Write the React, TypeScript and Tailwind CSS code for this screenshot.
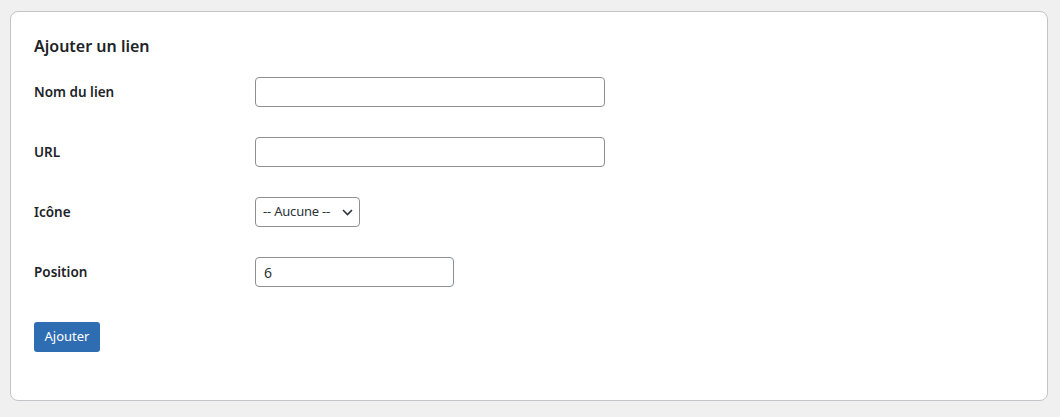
import React from "react";

const inputClass =
  "h-[30px] rounded-[4px] border border-[#8c8f94] bg-white px-2 text-[14px] text-[#2c3338] focus:outline-none";

function Row({ label, children }: { label: string; children: React.ReactNode }) {
  return (
    <div className="flex h-[30px] items-center">
      <label className="w-[221px] shrink-0 text-[13.5px] font-semibold text-[#1d2327]">{label}</label>
      {children}
    </div>
  );
}

export default function App() {
  return (
    <div
      className="min-h-[417px] bg-[#f0f0f1] pl-[10px] pr-[12px] pt-[11px] pb-[16px]"
      style={{ fontFamily: '"Noto Sans", sans-serif' }}
    >
      <div className="h-[390px] rounded-[8px] border border-[#c3c4c7] bg-white px-[23px] pt-[24px]">
        <h2 className="text-[16px] font-semibold leading-[20px] text-[#1d2327]">Ajouter un lien</h2>

        <div className="mt-[21px] flex flex-col gap-[30px]">
          <Row label="Nom du lien">
            <input className={`${inputClass} w-[350px]`} />
          </Row>
          <Row label="URL">
            <input className={`${inputClass} w-[350px]`} />
          </Row>
          <Row label="Icône">
            <div className="relative">
              <select className="h-[30px] w-[105px] appearance-none rounded-[4px] border border-[#8c8f94] bg-white pl-[7px] pr-[18px] text-[13px] tracking-[-0.2px] text-[#2c3338] focus:outline-none">
                <option>-- Aucune --</option>
              </select>
              <svg
                className="pointer-events-none absolute right-[7px] top-[12px]"
                width="11"
                height="7"
                viewBox="0 0 11 7"
                fill="none"
                stroke="#2c3338"
                strokeWidth="1.6"
              >
                <path d="M1 1l4.5 4.5L10 1" />
              </svg>
            </div>
          </Row>
          <Row label="Position">
            <input className={`${inputClass} w-[199px]`} defaultValue="6" />
          </Row>
        </div>

        <button className="mt-[35px] h-[30px] w-[66px] rounded-[3px] bg-[#2f6db3] text-[13px] text-white">
          Ajouter
        </button>
      </div>
    </div>
  );
}
